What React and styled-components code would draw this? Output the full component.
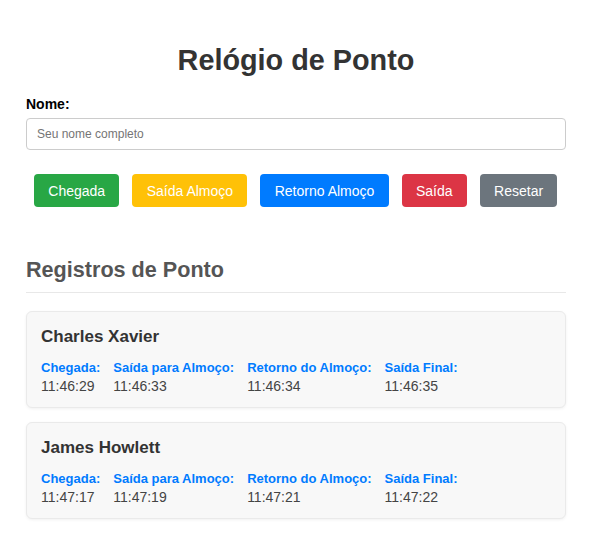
import React from 'react'
import styled, { createGlobalStyle } from 'styled-components'

const GlobalStyle = createGlobalStyle`
  body {
    margin: 0;
    background: #fff;
    font-family: "Liberation Sans", Arial, sans-serif;
  }
`

const BUTTONS = [
  { label: 'Chegada', color: '#28a745' },
  { label: 'Saída Almoço', color: '#ffc107' },
  { label: 'Retorno Almoço', color: '#007bff' },
  { label: 'Saída', color: '#dc3545' },
  { label: 'Resetar', color: '#6c757d' }
]

const RECORDS = [
  {
    name: 'Charles Xavier',
    times: ['11:46:29', '11:46:33', '11:46:34', '11:46:35']
  },
  {
    name: 'James Howlett',
    times: ['11:47:17', '11:47:19', '11:47:21', '11:47:22']
  }
]

const FIELDS = ['Chegada:', 'Saída para Almoço:', 'Retorno do Almoço:', 'Saída Final:']

const Page = styled.div`
  padding: 44px 25px 40px 26px;
`

const Title = styled.h1`
  margin: 0 0 19px;
  text-align: center;
  font-size: 28.8px;
  font-weight: bold;
  color: #333;
`

const Label = styled.label`
  display: block;
  margin-bottom: 6px;
  font-size: 14px;
  font-weight: bold;
  color: #000;
`

const Input = styled.input`
  display: block;
  box-sizing: border-box;
  width: 100%;
  height: 32px;
  padding: 0 10px;
  border: 1px solid #ccc;
  border-radius: 4px;
  font-family: inherit;
  font-size: 12px;
  &::placeholder {
    color: #757575;
  }
`

const ButtonRow = styled.div`
  display: flex;
  gap: 13px;
  margin: 24px 0 0;
  padding-left: 8px;
`

const ActionButton = styled.button`
  height: 33px;
  padding: 0 14.3px;
  border: none;
  border-radius: 4px;
  background: ${({ color }) => color};
  color: #fff;
  font-family: inherit;
  font-size: 14px;
  cursor: pointer;
`

const SectionTitle = styled.h2`
  margin: 50px 0 18px;
  padding-bottom: 9px;
  border-bottom: 1px solid #e8e8e8;
  font-size: 21.6px;
  font-weight: bold;
  color: #555;
`

const Card = styled.div`
  margin-bottom: 14px;
  padding: 15px 14px 13px;
  background: #f8f8f8;
  border: 1px solid #eaeaea;
  border-radius: 6px;
  box-shadow: 0 1px 3px rgba(0, 0, 0, 0.06);
`

const CardName = styled.div`
  margin-bottom: 13px;
  font-size: 17px;
  font-weight: bold;
  color: #333;
`

const Fields = styled.div`
  display: flex;
  gap: 13px;
`

const Field = styled.div`
  display: flex;
  flex-direction: column;
`

const FieldLabel = styled.span`
  margin-bottom: 3px;
  font-size: 13px;
  font-weight: bold;
  color: #007bff;
`

const FieldValue = styled.span`
  font-size: 14px;
  color: #444;
`

export default function App() {
  return (
    <Page>
      <GlobalStyle />
      <Title>Relógio de Ponto</Title>
      <Label htmlFor="nome">Nome:</Label>
      <Input id="nome" placeholder="Seu nome completo" />
      <ButtonRow>
        {BUTTONS.map(({ label, color }) => (
          <ActionButton key={label} color={color}>{label}</ActionButton>
        ))}
      </ButtonRow>
      <SectionTitle>Registros de Ponto</SectionTitle>
      {RECORDS.map(({ name, times }) => (
        <Card key={name}>
          <CardName>{name}</CardName>
          <Fields>
            {FIELDS.map((field, i) => (
              <Field key={field}>
                <FieldLabel>{field}</FieldLabel>
                <FieldValue>{times[i]}</FieldValue>
              </Field>
            ))}
          </Fields>
        </Card>
      ))}
    </Page>
  )
}
